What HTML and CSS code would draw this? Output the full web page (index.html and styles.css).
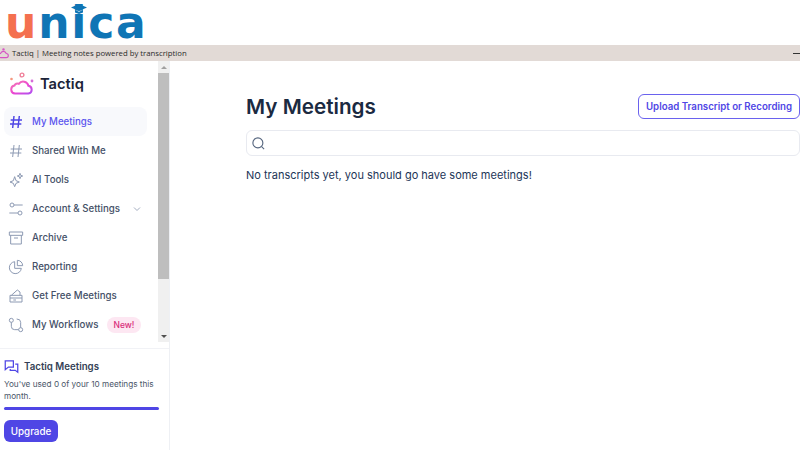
FILE: index.html
```html
<!DOCTYPE html>
<html lang="en">
<head>
    <meta charset="UTF-8">
    <meta name="viewport" content="width=device-width, initial-scale=1.0">
    <title>Tactiq | Meeting notes powered by transcription</title>
    <link rel="stylesheet" href="styles.css">
</head>
<body>

    <!-- Logo band -->
    <header class="brand-band">
        <div class="brand">
            <span class="brand-u">u</span><span class="brand-rest">nica</span>
            <svg class="brand-cap" width="16" height="10" viewBox="0 0 16 10">
                <path d="M8 0 L16 3.5 L8 7 L0 3.5 Z" fill="#0f75b5"/>
                <path d="M4 6 V8.5 L8 10 L12 8.5 V6 L8 7.8 Z" fill="#0f75b5"/>
            </svg>
        </div>
    </header>

    <!-- Window title -->
    <div class="titlebar">
        <svg class="title-icon" width="11" height="11" viewBox="0 0 24 24" fill="none" stroke="#d653c4" stroke-width="2.4">
            <path d="M6 21 a4.5 4.5 0 0 1 -.5 -9 a6.5 6.5 0 0 1 12.5 0 a4.5 4.5 0 0 1 0 9 Z"/>
            <circle cx="12" cy="3" r="1.5"/>
        </svg>
        <span class="title-text">Tactiq | Meeting notes powered by transcription</span>
        <span class="title-min"></span>
    </div>

    <div class="app">
        <!-- Sidebar -->
        <aside class="sidebar">
            <div class="side-scroll">
                <div class="side-nav">
                    <div class="logo">
                        <svg width="24" height="24" viewBox="0 0 24 24" fill="none">
                            <defs>
                                <linearGradient id="logoGrad" x1="0" y1="0" x2="1" y2="1">
                                    <stop offset="0" stop-color="#f27fb0"/>
                                    <stop offset="0.5" stop-color="#ee48d0"/>
                                    <stop offset="1" stop-color="#b04ff0"/>
                                </linearGradient>
                            </defs>
                            <path d="M5 21.5 a4 4 0 0 1 -.6 -7.9 a3.2 3.2 0 0 1 4.4 -1.8 a5.4 5.4 0 0 1 9.6 2 a3.9 3.9 0 0 1 0 7.7 Z" stroke="url(#logoGrad)" stroke-width="2"/>
                            <circle cx="12" cy="3" r="1.9" stroke="#f0809a" stroke-width="1.4"/>
                            <circle cx="1.5" cy="7" r="1.3" fill="#f5977f"/>
                            <circle cx="22" cy="9" r="1.4" fill="#d66bd8"/>
                        </svg>
                        <span class="logo-text">Tactiq</span>
                    </div>

                    <a class="nav-item active">
                        <svg class="nav-icon" viewBox="0 0 24 24"><path d="M9 3 L7 21 M17 3 L15 21 M4 9 H21 M3 15 H20"/></svg>
                        <span>My Meetings</span>
                    </a>
                    <a class="nav-item">
                        <svg class="nav-icon" viewBox="0 0 24 24"><path d="M9 3 L7 21 M17 3 L15 21 M4 9 H21 M3 15 H20"/></svg>
                        <span>Shared With Me</span>
                    </a>
                    <a class="nav-item">
                        <svg class="nav-icon" viewBox="0 0 24 24"><path d="M10 7 L12 13 L17 15 L12 17 L10 22 L8 17 L3 15 L8 13 Z M18 2 L19 5 L22 6 L19 7 L18 10 L17 7 L14 6 L17 5 Z"/></svg>
                        <span>AI Tools</span>
                    </a>
                    <a class="nav-item">
                        <svg class="nav-icon" viewBox="0 0 24 24"><circle cx="6" cy="6" r="3"/><path d="M9 6 H22 M2 18 H15"/><circle cx="18" cy="18" r="3"/></svg>
                        <span>Account &amp; Settings</span>
                        <svg class="chevron" width="8" height="8" viewBox="0 0 8 8"><path d="M1 2.5 L4 5.5 L7 2.5"/></svg>
                    </a>
                    <a class="nav-item">
                        <svg class="nav-icon" viewBox="0 0 24 24"><path d="M2 3 H22 V8 H2 Z M4 8 V21 H20 V8 M9 12 H15"/></svg>
                        <span>Archive</span>
                    </a>
                    <a class="nav-item">
                        <svg class="nav-icon" viewBox="0 0 24 24"><path d="M10 4 A9 9 0 1 0 20 14 H10 Z M14 2 A8 8 0 0 1 22 10 H14 Z"/></svg>
                        <span>Reporting</span>
                    </a>
                    <a class="nav-item">
                        <svg class="nav-icon" viewBox="0 0 24 24"><path d="M3 11 H21 V21 H3 Z M3 15 H21 M5 11 L14 3 L18 6 V11 M8 18 H12"/></svg>
                        <span>Get Free Meetings</span>
                    </a>
                    <a class="nav-item">
                        <svg class="nav-icon" viewBox="0 0 24 24"><circle cx="5" cy="5" r="3"/><circle cx="19" cy="19" r="3"/><path d="M5 8 V14 Q5 19 10 19 H16 M13 3 Q19 3 19 8 V16"/></svg>
                        <span>My Workflows</span>
                        <span class="badge">New!</span>
                    </a>
                </div>

                <div class="scrollbar">
                    <div class="sb-btn"><span class="sb-up"></span></div>
                    <div class="sb-track"><div class="sb-thumb"></div></div>
                    <div class="sb-btn"><span class="sb-down"></span></div>
                </div>
            </div>

            <div class="side-foot">
                <div class="foot-title">
                    <svg width="15" height="15" viewBox="0 0 24 24" fill="none" stroke="#4f46e5" stroke-width="2">
                        <path d="M2 3 H15 V13 H7 L2 17 Z M18 8 H22 V21 L18 18 H10 V16"/>
                    </svg>
                    <span>Tactiq Meetings</span>
                </div>
                <p class="foot-text">You've used 0 of your 10 meetings this month.</p>
                <div class="progress"></div>
                <button class="upgrade">Upgrade</button>
            </div>
        </aside>

        <!-- Main Content -->
        <main class="content">
            <div class="content-head">
                <h1>My Meetings</h1>
                <button class="upload">Upload Transcript or Recording</button>
            </div>
            <div class="search-box">
                <svg width="15" height="15" viewBox="0 0 24 24" fill="none" stroke="#55657e" stroke-width="1.8">
                    <circle cx="11" cy="11" r="8"/>
                    <path d="M17 17 L21 21"/>
                </svg>
            </div>
            <p class="empty">No transcripts yet, you should go have some meetings!</p>
        </main>
    </div>

</body>
</html>
```

FILE: styles.css
```css
/* Reset and General Styling */
* {
    margin: 0;
    padding: 0;
    box-sizing: border-box;
    font-family: 'Inter', sans-serif;
}

body {
    width: 800px;
    height: 450px;
    overflow: hidden;
    background: #ffffff;
    display: flex;
    flex-direction: column;
}

/* Logo band */
.brand-band {
    height: 45px;
    padding-left: 5px;
    flex-shrink: 0;
}

.brand {
    position: relative;
    display: inline-block;
    font-size: 44px;
    font-weight: 700;
    line-height: 44px;
    letter-spacing: 1.8px;
}

.brand span {
    font-family: 'DejaVu Sans', sans-serif;
}

.brand-u {
    color: #f4704f;
}

.brand-rest {
    color: #0f75b5;
}

.brand-cap {
    position: absolute;
    top: 4px;
    left: 66px;
}

/* Window title */
.titlebar {
    height: 16px;
    background: #e2dad6;
    display: flex;
    align-items: center;
    flex-shrink: 0;
}

.title-icon {
    margin-left: -2px;
    margin-right: 3px;
}

.title-text {
    font-family: 'Open Sans', sans-serif;
    font-size: 7.75px;
    color: #2b2b2b;
}

.title-min {
    margin-left: auto;
    width: 7px;
    height: 1px;
    background: #333333;
}

.app {
    flex: 1;
    display: flex;
    min-height: 0;
}

/* Sidebar */
.sidebar {
    width: 170px;
    border-right: 1px solid #eef0f4;
    display: flex;
    flex-direction: column;
}

.side-scroll {
    height: 281px;
    display: flex;
    flex-shrink: 0;
}

.side-nav {
    flex: 1;
    min-width: 0;
    padding: 0 11px 0 4px;
}

.logo {
    height: 46px;
    display: flex;
    align-items: center;
    gap: 6px;
    padding-left: 6px;
}

.logo-text {
    font-size: 14.7px;
    font-weight: 600;
    color: #1b2338;
}

.nav-item {
    height: 29px;
    display: flex;
    align-items: center;
    gap: 8px;
    padding-left: 4px;
    border-radius: 8px;
    font-size: 9.7px;
    font-weight: 500;
    color: #445067;
    white-space: nowrap;
}

.nav-item.active {
    color: #5b55ee;
    background: #f8f9fc;
}

.nav-icon {
    width: 16px;
    height: 16px;
    flex-shrink: 0;
    fill: none;
    stroke: #8d9ab3;
    stroke-width: 1.5;
}

.active .nav-icon {
    stroke: #4f46e5;
    stroke-width: 2.2;
}

.chevron {
    margin-left: 5px;
    fill: none;
    stroke: #a3adc0;
    stroke-width: 1;
}

.badge {
    padding: 3px 7px;
    border-radius: 9px;
    background: #fde7f2;
    color: #d92d7a;
    font-size: 8.5px;
}

/* Scrollbar */
.scrollbar {
    width: 11px;
    background: #f0f0f0;
    display: flex;
    flex-direction: column;
    flex-shrink: 0;
}

.sb-btn {
    height: 12px;
    display: flex;
    align-items: center;
    justify-content: center;
}

.sb-up {
    border: 3px solid transparent;
    border-top: 0;
    border-bottom: 3px solid #a0a0a0;
}

.sb-down {
    border: 3px solid transparent;
    border-bottom: 0;
    border-top: 3px solid #505050;
}

.sb-track {
    flex: 1;
}

.sb-thumb {
    height: 206px;
    background: #bebebe;
}

/* Sidebar footer */
.side-foot {
    flex: 1;
    margin-top: 6px;
    border-top: 1px solid #f1f2f6;
    padding: 10px 10px 0 4px;
}

.foot-title {
    display: flex;
    align-items: center;
    gap: 5px;
    font-size: 9.7px;
    font-weight: 600;
    color: #343f55;
}

.foot-text {
    margin-top: 5px;
    font-size: 8.2px;
    line-height: 11.5px;
    color: #4a5568;
}

.progress {
    height: 3px;
    margin-top: 5px;
    border-radius: 2px;
    background: #4f46e5;
}

.upgrade {
    margin-top: 10px;
    width: 54px;
    height: 22px;
    border: none;
    border-radius: 6px;
    background: #4f46e5;
    color: #ffffff;
    font-size: 9.8px;
    font-weight: 500;
}

/* Main content */
.content {
    flex: 1;
    padding: 33px 0 0 76px;
}

.content-head {
    height: 25px;
    display: flex;
    align-items: center;
    justify-content: space-between;
}

h1 {
    font-size: 20.7px;
    font-weight: 600;
    color: #1b2a41;
}

.upload {
    width: 162px;
    height: 25px;
    background: #ffffff;
    border: 1px solid #6a62ee;
    border-radius: 6px;
    color: #4f46e5;
    font-size: 9.7px;
    font-weight: 600;
}

.search-box {
    height: 26px;
    margin-top: 11px;
    padding-left: 4px;
    border: 1px solid #e8eaf0;
    border-radius: 6px;
    display: flex;
    align-items: center;
}

.empty {
    margin-top: 12px;
    font-size: 11px;
    line-height: 15px;
    color: #1c3557;
}
```
